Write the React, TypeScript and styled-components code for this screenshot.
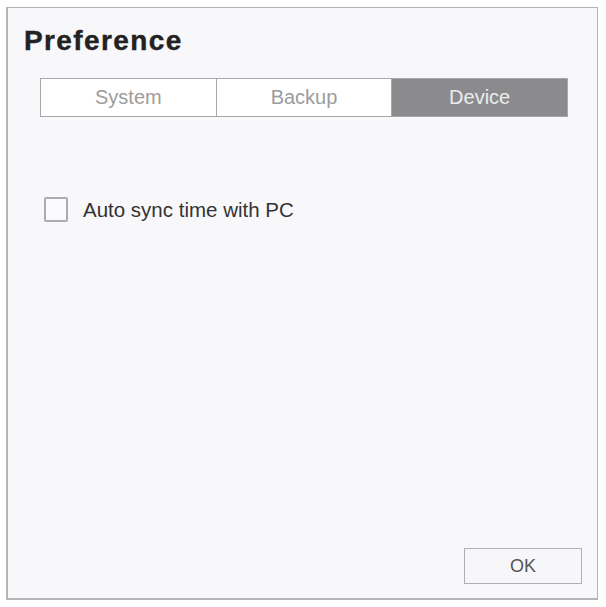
import React, {useState} from "react";
import styled, {createGlobalStyle} from "styled-components";

const GlobalStyle = createGlobalStyle`
    html, body {
        margin: 0;
        padding: 0;
        background: #fff;
        font-family: "Liberation Sans", Arial, sans-serif;
    }
`;

const Page = styled.div`
    width: 606px;
    height: 607px;
    padding: 7px 8px 7px 6px;
    box-sizing: border-box;
`;

const Window = styled.div`
    height: 100%;
    box-sizing: border-box;
    background: #f8f8fb;
    border: 1px solid #b4b4b6;
    border-left-width: 2px;
    border-bottom-width: 2px;
    display: flex;
    flex-direction: column;
    padding: 18px 29px 14px 16px;
`;

const Title = styled.h1`
    margin: 0;
    font-size: 28px;
    font-weight: 900;
    color: #222;
    line-height: 30px;
    letter-spacing: 1.4px;
    -webkit-text-stroke: 0.4px #222;
`;

const Tabs = styled.div`
    display: flex;
    margin: 22px 0 0 16px;
    border: 1px solid #a8a8aa;
    height: 39px;
    box-sizing: border-box;
`;

const Tab = styled.button<{active: boolean}>`
    flex: 1;
    border: none;
    border-left: 1px solid #a8a8aa;
    &:first-child {
        border-left: none;
    }
    background: ${({active}) => active ? "#8b8b8e" : "#fff"};
    color: ${({active}) => active ? "#ececec" : "#9c9c9c"};
    font-family: inherit;
    font-size: 20px;
    cursor: pointer;
    padding: 0;
`;

const Body = styled.div`
    flex: 1;
    padding: 80px 0 0 20px;
`;

const CheckRow = styled.label`
    display: flex;
    align-items: center;
    gap: 15px;
    font-size: 20.5px;
    color: #333;
    cursor: pointer;
`;

const Box = styled.span<{checked: boolean}>`
    width: 20px;
    height: 21px;
    border: 2px solid #adadb0;
    border-radius: 2px;
    background: #fbfbfd;
    display: flex;
    align-items: center;
    justify-content: center;
    color: #555;
    font-size: 15px;
`;

const Footer = styled.div`
    display: flex;
    justify-content: flex-end;
    margin-right: -14px;
`;

const OkButton = styled.button`
    width: 118px;
    height: 36px;
    border: 1px solid #b0b0b2;
    background: #f7f7f9;
    font-family: inherit;
    font-size: 18px;
    color: #555;
    cursor: pointer;
`;

const tabs = ["System", "Backup", "Device"];

const App = () => {
    const [tab, setTab] = useState("Device");
    const [sync, setSync] = useState(false);

    return (
        <>
            <GlobalStyle/>
            <Page>
                <Window>
                    <Title>Preference</Title>
                    <Tabs>
                        {tabs.map(name => (
                            <Tab key={name} active={tab === name} onClick={() => setTab(name)}>{name}</Tab>
                        ))}
                    </Tabs>
                    <Body>
                        <CheckRow onClick={() => setSync(!sync)}>
                            <Box checked={sync}>{sync ? "✓" : ""}</Box>
                            Auto sync time with PC
                        </CheckRow>
                    </Body>
                    <Footer>
                        <OkButton>OK</OkButton>
                    </Footer>
                </Window>
            </Page>
        </>
    );
};

export default App;
